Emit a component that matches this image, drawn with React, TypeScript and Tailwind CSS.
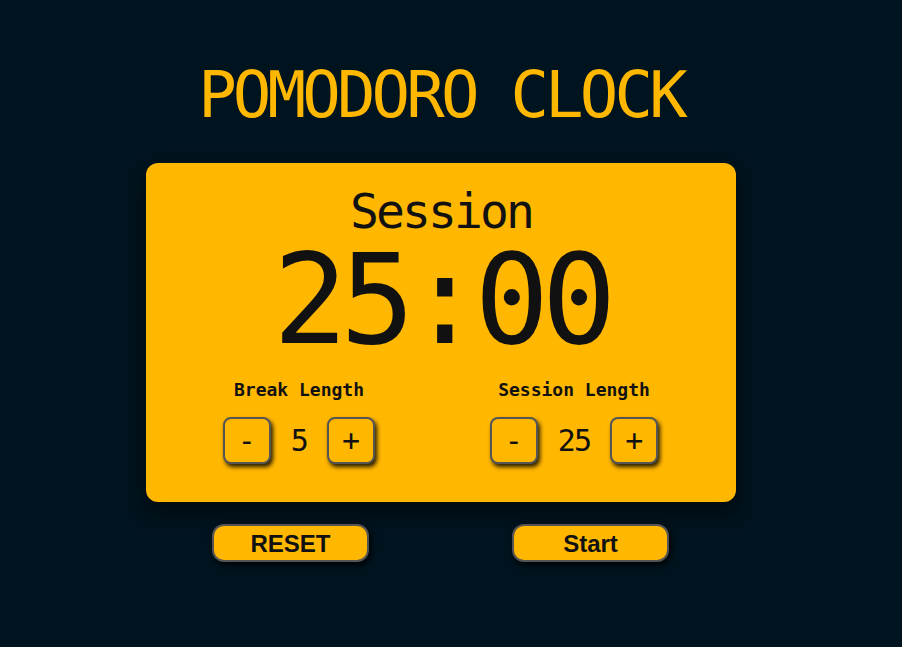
const mono = { fontFamily: '"DejaVu Sans Mono", "Liberation Mono", monospace' };

const Stepper = ({ label, value }: { label: string; value: number }) => {
    return (
        <div className="w-[240px] flex flex-col items-center">
            <div className="text-[18px] leading-none h-[18px] font-bold text-[#111]">{label}</div>
            <div className="mt-[18px] flex items-center gap-5">
                <button className="w-[48px] h-[47px] rounded-[8px] border-2 border-[#555] bg-[#ffb700] text-[30px] leading-none text-[#111] shadow-[2px_3px_4px_rgba(0,0,0,0.85)] flex items-center justify-center">
                    -
                </button>
                <span className="text-[30px] leading-none text-[#111] tracking-[-0.06em]">{value}</span>
                <button className="w-[48px] h-[47px] rounded-[8px] border-2 border-[#555] bg-[#ffb700] text-[30px] leading-none text-[#111] shadow-[2px_3px_4px_rgba(0,0,0,0.85)] flex items-center justify-center">
                    +
                </button>
            </div>
        </div>
    );
};

const App = () => {
    return (
        <div className="min-h-screen bg-[#00141f]" style={mono}>
            <div className="w-[590px] ml-[146px] pt-[63px] pb-[80px]">
                <h1 className="text-center text-[64px] leading-none h-[64px] text-[#ffb700] tracking-[-0.06em]">
                    POMODORO CLOCK
                </h1>

                {/* Timer card */}
                <div className="mt-[36px] h-[339px] rounded-[12px] bg-[#ffb700] pt-[24px] shadow-[0_10px_22px_rgba(0,0,0,0.55)] flex flex-col items-center text-[#111]">
                    <div className="text-[48px] leading-none h-[48px] tracking-[-0.06em]">Session</div>
                    <div className="mt-[3px] text-[124px] leading-none h-[124px] tracking-[-0.06em]">25:00</div>
                    <div className="mt-[19px] flex justify-center gap-[35px] pr-[9px]">
                        <Stepper label="Break Length" value={5} />
                        <Stepper label="Session Length" value={25} />
                    </div>
                </div>

                {/* Controls */}
                <div className="mt-[22px] flex justify-center gap-[143px] pr-[1px]">
                    <button
                        className="w-[157px] h-[38px] rounded-[12px] border-2 border-[#555] bg-[#ffb700] text-[24px] font-bold text-[#111] shadow-[2px_3px_6px_rgba(0,0,0,0.9)]"
                        style={{ fontFamily: '"Liberation Sans", Arial, sans-serif' }}
                    >
                        RESET
                    </button>
                    <button
                        className="w-[157px] h-[38px] rounded-[12px] border-2 border-[#555] bg-[#ffb700] text-[24px] font-bold text-[#111] shadow-[2px_3px_6px_rgba(0,0,0,0.9)]"
                        style={{ fontFamily: '"Liberation Sans", Arial, sans-serif' }}
                    >
                        Start
                    </button>
                </div>
            </div>
        </div>
    );
};

export default App;
